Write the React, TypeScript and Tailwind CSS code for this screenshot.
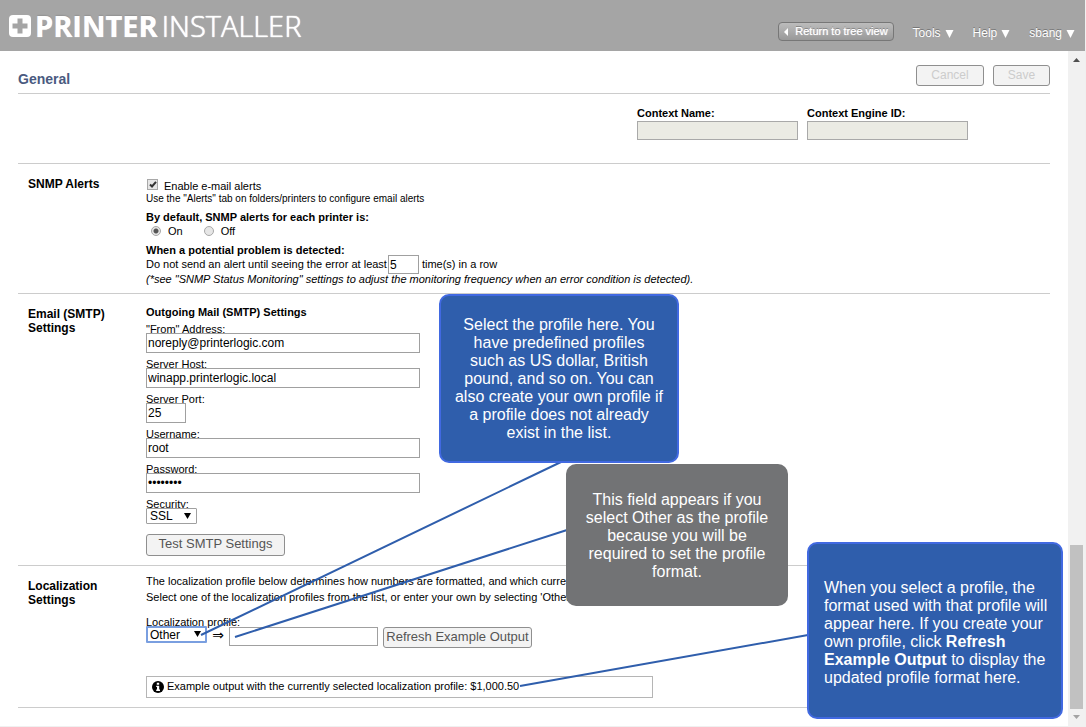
import type { ReactNode } from "react";

const inputBox = "block border border-[#a0a0a0] bg-white px-px text-[12px] text-black outline-none";
const greyButton = "rounded-[3px] border border-[#8f8f8f] bg-[#f3f3f3] pb-[2px] leading-[16px] whitespace-nowrap";

function Section({ title, children }: { title: string; children: ReactNode }) {
  return (
    <section className="flex border-b border-[#ccc] pl-[10px]">
      <h2 className="w-[118px] shrink-0 pt-[13px] pr-6 text-[12px] leading-[14px] font-bold">{title}</h2>
      <div className="min-w-0 flex-1">{children}</div>
    </section>
  );
}

function Field({
  id,
  label,
  value,
  type = "text",
  width,
}: {
  id: string;
  label: string;
  value: string;
  type?: string;
  width: string;
}) {
  return (
    <div className="flex flex-col">
      <label htmlFor={id} className="h-[11px] leading-[14px]">
        {label}
      </label>
      <input id={id} type={type} defaultValue={value} className={`${inputBox} h-5 ${width}`} />
    </div>
  );
}

function Picker({
  id,
  options,
  className,
}: {
  id: string;
  options: string[];
  className: string;
}) {
  return (
    <span className="relative flex">
      <select
        id={id}
        className={`appearance-none rounded-[1px] bg-white text-[12px] leading-[14px] outline-none ${className}`}
      >
        {options.map((o) => (
          <option key={o}>{o}</option>
        ))}
      </select>
      <svg className="pointer-events-none absolute top-[5px] right-[6px]" width="7" height="6" viewBox="0 0 7 6">
        <path d="M0 0h7L3.5 6z" fill="#000" />
      </svg>
    </span>
  );
}

function Radio({ id, label, checked }: { id: string; label: string; checked?: boolean }) {
  return (
    <span className="flex items-center gap-[7px]">
      <input
        id={id}
        type="radio"
        name="default-alerts"
        defaultChecked={checked}
        className="h-[10px] w-[10px] appearance-none rounded-full border border-[#a8a8a8] bg-[#e6e6e6] checked:bg-[radial-gradient(circle,#555_0_2px,#e6e6e6_3px)]"
      />
      <label htmlFor={id}>{label}</label>
    </span>
  );
}

function MenuLink({ href, label }: { href: string; label: string }) {
  return (
    <a href={href} className="flex items-center gap-[4px] pt-[3px]">
      {label}
      <svg width="9" height="8" viewBox="0 0 9 8" className="mt-[2px]">
        <path d="M.5 0h8l-4 8z" fill="#fff" />
      </svg>
    </a>
  );
}

function Header() {
  return (
    <header className="flex h-[51px] items-start justify-between bg-[#a5a5a5] pr-[10px] pl-2 text-white">
      <div className="flex items-center pt-[6px]">
        <svg width="23" height="22" viewBox="0 0 23 22" className="mr-1">
          <rect x="1" y="0" width="22" height="22" rx="4" fill="#fff" />
          <path d="M9.500 3.500h5v5h5v5h-5v5h-5v-5h-5v-5h5z" fill="#a5a5a5" />
        </svg>
        <span className="font-['Open_Sans'] text-[29px] leading-10 font-bold [text-shadow:0_0_1px_#fff,0_-1px_1px_#888]">
          PRINTER
        </span>
        <span className="ml-1 font-['Open_Sans'] text-[29px] leading-10 font-light [text-shadow:0_0_1px_#fff,0_0_1px_#fff]">
          INSTALLER
        </span>
      </div>
      <nav className="flex items-center gap-[19px] pt-[21px] text-[12px] [text-shadow:0_-1px_0_#777]">
        <button className="flex h-[19px] items-center gap-[7px] rounded-[4px] border border-[#777] bg-linear-to-b from-[#bcbcbc] to-[#999] px-[5px] text-[11px] whitespace-nowrap [text-shadow:0_0_1px_#fff,0_-1px_0_#777]">
          <svg width="4" height="8" viewBox="0 0 4 8">
            <path d="M4 0v8L0 4z" fill="#fff" />
          </svg>
          Return to tree view
        </button>
        <MenuLink href="#tools" label="Tools" />
        <MenuLink href="#help" label="Help" />
        <MenuLink href="#account" label="sbang" />
      </nav>
    </header>
  );
}

function ContextField({ id, label }: { id: string; label: string }) {
  return (
    <div className="flex flex-col">
      <label htmlFor={id} className="leading-[15px] font-bold">
        {label}
      </label>
      <input id={id} disabled className="h-[19px] w-[161px] border border-[#a9a9a9] bg-[#ebebe4]" />
    </div>
  );
}

function Scrollbar() {
  return (
    <div aria-hidden="true" className="flex w-[17px] shrink-0 flex-col items-center bg-[#f1f1f1] pt-[7px] pb-[7px]">
      <svg width="7" height="4" viewBox="0 0 7 4">
        <path d="M0 4h7L3.500 0z" fill="#505050" />
      </svg>
      <div className="flex-1" />
      <div className="mb-[6px] h-[164px] w-[13px] bg-[#c1c1c1]" />
      <svg width="7" height="4" viewBox="0 0 7 4">
        <path d="M0 0h7L3.500 4z" fill="#a3a3a3" />
      </svg>
    </div>
  );
}

export default function App() {
  return (
    <div className="relative flex min-h-screen flex-col bg-[#f0f0f0] pr-px pb-px font-['Liberation_Sans',Arial,sans-serif] text-[11px] text-black">
      <Header />
      <div className="flex flex-1 bg-white">
        <main className="min-w-0 flex-1 pr-[18px] pl-[18px]">
          <div className="flex h-[43px] items-start justify-between border-b border-[#ccc] pt-[14px]">
            <h1 className="pt-1 text-[14px] leading-5 font-bold text-[#4a5a80]">General</h1>
            <div className="flex gap-[9px]">
              <button disabled className={`${greyButton} h-[21px] w-[68px] text-[12px] text-[#ccc]`}>
                Cancel
              </button>
              <button disabled className={`${greyButton} h-[21px] w-[57px] text-[12px] text-[#ccc]`}>
                Save
              </button>
            </div>
          </div>

          <div className="flex h-[70px] gap-[9px] border-b border-[#ccc] pt-3 pl-[619px]">
            <ContextField id="context-name" label="Context Name:" />
            <ContextField id="context-engine" label="Context Engine ID:" />
          </div>

          <Section title="SNMP Alerts">
            <div className="flex h-[129px] flex-col pt-[15px]">
              <div className="flex items-start gap-[6px] leading-[14px]">
                <span className="relative flex">
                  <input
                    id="enable-alerts"
                    type="checkbox"
                    defaultChecked
                    className="peer ml-px h-[11px] w-[11px] appearance-none border border-[#a8a8a8] bg-[#e6e6e6]"
                  />
                  <svg
                    className="pointer-events-none absolute top-[2px] left-[3px] hidden peer-checked:block"
                    width="8"
                    height="7"
                    viewBox="0 0 8 7"
                  >
                    <path d="M1 3.500l2 2L7 .8" fill="none" stroke="#333" strokeWidth="2" />
                  </svg>
                </span>
                <label htmlFor="enable-alerts">Enable e-mail alerts</label>
              </div>
              <p className="text-[10px] leading-[12px]">Use the "Alerts" tab on folders/printers to configure email alerts</p>
              <p className="mt-[5px] leading-[14px] font-bold">By default, SNMP alerts for each printer is:</p>
              <div className="flex gap-[21px] pl-[5px] leading-[14px]">
                <Radio id="alerts-on" label="On" checked />
                <Radio id="alerts-off" label="Off" />
              </div>
              <p className="mt-[5px] leading-[14px] font-bold">When a potential problem is detected:</p>
              <div className="flex h-[15px] items-center">
                <label htmlFor="error-count">Do not send an alert until seeing the error at least</label>
                <input
                  id="error-count"
                  defaultValue="5"
                  className={`${inputBox} mr-[3px] ml-px h-[19px] w-[31px]`}
                />
                <span>time(s) in a row</span>
              </div>
              <p className="leading-[14px] italic">
                (*see "SNMP Status Monitoring" settings to adjust the monitoring frequency when an error condition is
                detected).
              </p>
            </div>
          </Section>

          <Section title="Email (SMTP) Settings">
            <div className="flex h-[271px] flex-col items-start gap-1 pt-[11px]">
              <h3 className="h-[13px] leading-[14px] font-bold">Outgoing Mail (SMTP) Settings</h3>
              <Field id="from" label={'"From" Address:'} value="noreply@printerlogic.com" width="w-[274px]" />
              <Field id="host" label="Server Host:" value="winapp.printerlogic.local" width="w-[274px]" />
              <Field id="port" label="Server Port:" value="25" width="w-10" />
              <Field id="user" label="Username:" value="root" width="w-[274px]" />
              <Field id="password" label="Password:" value="password" type="password" width="w-[274px]" />
              <div className="flex flex-col">
                <label htmlFor="security" className="h-[11px] leading-[14px]">
                  Security:
                </label>
                <Picker
                  id="security"
                  options={["SSL", "TLS", "None"]}
                  className="h-4 w-[51px] border border-[#a0a0a0] pl-[3px]"
                />
              </div>
              <button className={`${greyButton} mt-[6px] h-[22px] w-[139px] text-[13px] text-[#555]`}>
                Test SMTP Settings
              </button>
            </div>
          </Section>

          <Section title="Localization Settings">
            <div className="flex h-[141px] flex-col items-start pt-[7px]">
              <p className="h-8 overflow-hidden leading-4">
                The localization profile below determines how numbers are formatted, and which currency
                <br />
                Select one of the localization profiles from the list, or enter your own by selecting 'Other'.
              </p>
              <label htmlFor="profile" className="mt-[10px] h-[11px] leading-[14px]">
                Localization profile:
              </label>
              <div className="flex items-start">
                <Picker
                  id="profile"
                  options={["Other", "US dollar", "British pound"]}
                  className="h-[17px] w-[61px] border-2 border-[#7a9fe0] pl-[2px]"
                />
                <span className="mt-px w-[22px] text-center font-['DejaVu_Sans'] text-[14px] leading-[17px]">⇒</span>
                <input aria-label="Profile format" className={`${inputBox} mt-px h-[19px] w-[149px]`} />
                <button className={`${greyButton} mt-px ml-[5px] h-[21px] w-[149px] text-[13px] text-[#555]`}>
                  Refresh Example Output
                </button>
              </div>
              <div className="mt-7 flex h-[22px] w-[507px] items-center gap-[3px] border border-[#b5b5b5] pb-px pl-[5px]">
                <svg width="12" height="12" viewBox="0 0 12 12">
                  <circle cx="6" cy="6" r="6" fill="#000" />
                  <path d="M4.800 1.800h2.400v2H4.800zM4.200 4.700h3v3.900h.8v1.300H4.200V8.600h.8V6h-.8z" fill="#fff" />
                </svg>
                <span>Example output with the currently selected localization profile: $1,000.50</span>
              </div>
            </div>
          </Section>
        </main>
        <Scrollbar />
      </div>

      <svg
        className="pointer-events-none absolute top-0 left-0"
        width="1086"
        height="727"
        viewBox="0 0 1086 727"
        fill="none"
        stroke="#2f5eac"
        strokeWidth="2"
      >
        <path d="M561 462L201 635M567 530L235 637M808 635L520 686" />
      </svg>
      <aside className="absolute top-[294px] left-[439px] flex h-[169px] w-[240px] items-center justify-center rounded-[10px] border-2 border-[#4169e1] bg-[#2f5eac] px-3 text-center text-[16px] leading-[18px] text-white">
        <p>
          Select the profile here. You
          <br />
          have predefined profiles
          <br />
          such as US dollar, British
          <br />
          pound, and so on. You can
          <br />
          also create your own profile if
          <br />
          a profile does not already
          <br />
          exist in the list.
        </p>
      </aside>
      <aside className="absolute top-[464px] left-[566px] flex h-[142px] w-[222px] items-center justify-center rounded-[10px] bg-[#727375] px-4 pt-px text-center text-[16px] leading-[18px] text-white">
        <p>
          This field appears if you select Other as the profile because you will be required to set the profile format.
        </p>
      </aside>
      <aside className="absolute top-[542px] left-[807px] flex h-[177px] w-[256px] items-center rounded-[10px] border-2 border-[#4169e1] bg-[#2f5eac] pt-1 pr-2 pl-[15px] text-[16px] leading-[18px] text-white">
        <p>
          When you select a profile, the format used with that profile will appear here. If you create your own profile,
          click <b>Refresh Example Output</b> to display the updated profile format here.
        </p>
      </aside>
    </div>
  );
}
